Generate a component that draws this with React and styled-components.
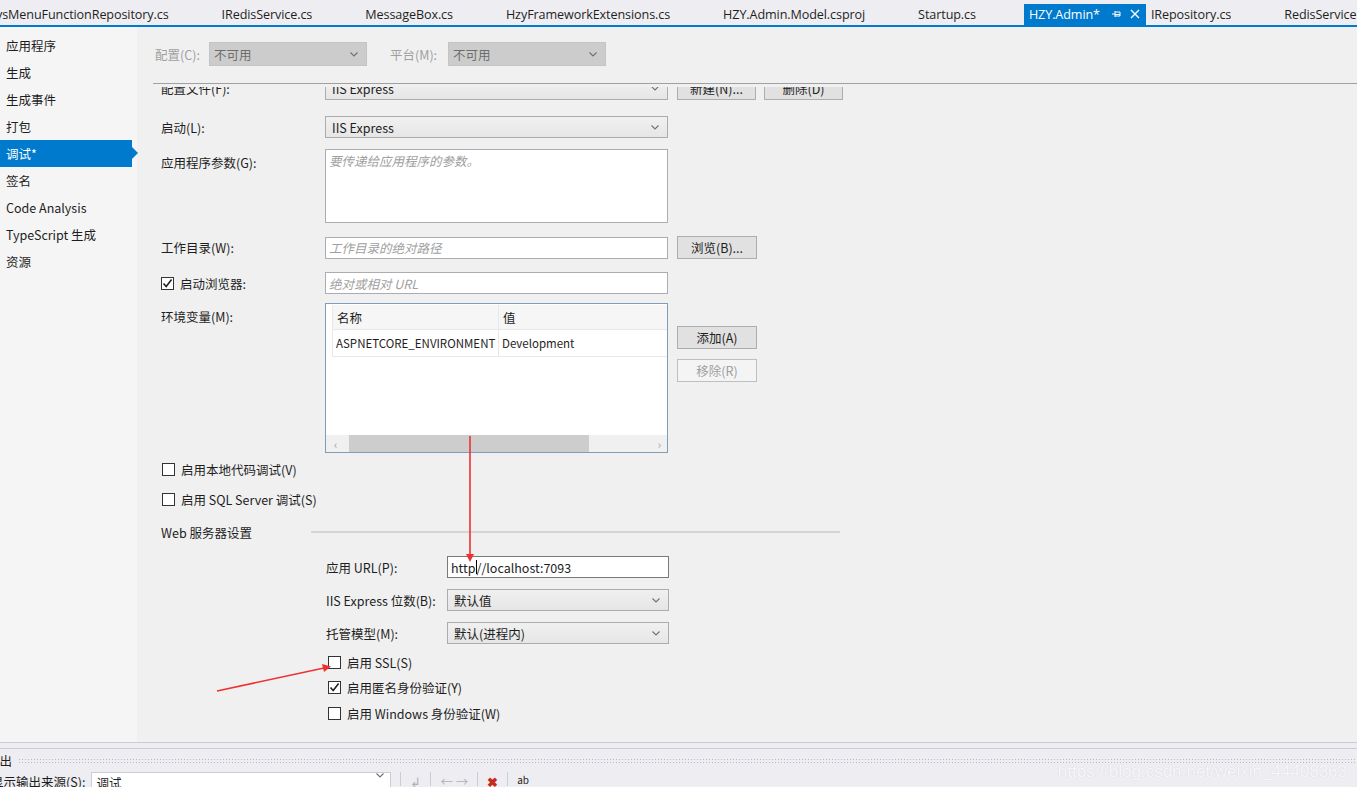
import React from "react";
import styled, { createGlobalStyle } from "styled-components";

const GlobalStyle = createGlobalStyle`
  html, body {
    margin: 0;
    padding: 0;
    background: #f0f0f0;
    overflow: hidden;
  }
  * {
    box-sizing: border-box;
  }
`;

const ui = `"Noto Sans CJK SC", "Noto Sans", sans-serif`;
const tabFont = `"Open Sans", "Noto Sans CJK SC", sans-serif`;

const Page = styled.div`
  position: relative;
  width: 1357px;
  height: 787px;
  display: flex;
  flex-direction: column;
  font-family: ${ui};
  font-size: 12.5px;
  color: #1e1e1e;
  overflow: hidden;
`;

/* ---------- document tabs ---------- */

const TabBar = styled.div`
  height: 27px;
  flex: none;
  display: flex;
  align-items: flex-end;
  background: #eeeef2;
  border-bottom: 2px solid #007acc;
  white-space: nowrap;
  overflow: hidden;
`;

const Tab = styled.div`
  height: 21px;
  display: flex;
  align-items: center;
  gap: 12px;
  margin-left: ${(p) => (p.$first ? "-4px" : "0")};
  padding: 0 ${(p) => (p.$active ? "6px" : "48px")} 1px ${(p) => (p.$first ? "0" : "5px")};
  background: ${(p) => (p.$active ? "#007acc" : "transparent")};
  color: ${(p) => (p.$active ? "#fff" : "#1e1e1e")};
  font-family: ${tabFont};
  font-size: 12.6px;
  letter-spacing: -0.1px;
  flex: none;
`;

const TabIcons = styled.span`
  display: flex;
  align-items: center;
  gap: 8px;
`;

/* ---------- body ---------- */

const Body = styled.div`
  flex: 1;
  display: flex;
  min-height: 0;
`;

const Sidebar = styled.nav`
  width: 137px;
  flex: none;
  background: #f5f5f5;
  padding-top: 5px;
`;

const NavItem = styled.div`
  position: relative;
  width: 132px;
  height: 27px;
  display: flex;
  align-items: center;
  padding-left: 6px;
  font-size: 12.5px;
  background: ${(p) => (p.$active ? "#007acc" : "transparent")};
  color: ${(p) => (p.$active ? "#fff" : "#1e1e1e")};

  ${(p) =>
    p.$active &&
    `
    &::after {
      content: "";
      position: absolute;
      right: -6px;
      top: 7px;
      border-top: 6.5px solid transparent;
      border-bottom: 6.5px solid transparent;
      border-left: 6px solid #007acc;
    }
  `}
`;

const Main = styled.main`
  flex: 1;
  display: flex;
  flex-direction: column;
  background: #f0f0f0;
  min-width: 0;
`;

const ConfigBar = styled.div`
  height: 57px;
  flex: none;
  display: flex;
  align-items: center;
  padding: 0 0 2px 2px;
  margin-left: 16px;
  border-bottom: 1px solid #a0a0a0;
  color: #a0a0a0;
`;

const ConfigLabel = styled.span`
  width: ${(p) => p.$w}px;
  flex: none;
`;

const DisabledSelect = styled.div`
  width: 158px;
  height: 24px;
  display: flex;
  align-items: center;
  justify-content: space-between;
  padding: 0 8px 0 4px;
  background: #cccccc;
  border: 1px solid #c4c4c4;
  color: #6d6d6d;
  margin-right: 23px;
`;

const Scroll = styled.div`
  flex: 1;
  overflow: hidden;
  min-height: 0;
  margin-top: 3px;
`;

const Form = styled.div`
  margin-top: -10px;
  padding-left: 24px;
  display: flex;
  flex-direction: column;
`;

const Row = styled.div`
  display: grid;
  grid-template-columns: ${(p) => p.$label || 155}px 343px auto;
  align-items: ${(p) => (p.$top ? "start" : "center")};
  column-gap: 9px;
  margin-top: ${(p) => p.$mt || 0}px;
  padding-left: ${(p) => p.$indent || 0}px;
`;

const Label = styled.label`
  display: flex;
  align-items: center;
  gap: 6px;
  padding-top: ${(p) => (p.$top ? "4px" : "0")};
  white-space: nowrap;
`;

const Select = styled.div`
  width: ${(p) => p.$w || 343}px;
  height: 22px;
  display: flex;
  align-items: center;
  justify-content: space-between;
  padding: 0 8px 0 6px;
  background: linear-gradient(#f0f0f0, #e6e6e6);
  border: 1px solid #acacac;
`;

const Input = styled.div`
  width: ${(p) => p.$w || 343}px;
  height: ${(p) => p.$h || 22}px;
  display: flex;
  align-items: ${(p) => (p.$multi ? "flex-start" : "center")};
  padding: ${(p) => (p.$multi ? "1px 3px" : "0 3px")};
  background: #fff;
  border: 1px solid ${(p) => (p.$dark ? "#7a7a7a" : "#abadb3")};
  color: ${(p) => (p.$placeholder ? "#a0a0a0" : "#1e1e1e")};
  font-style: ${(p) => (p.$placeholder ? "italic" : "normal")};
`;

const Caret = styled.span`
  display: inline-block;
  width: 1px;
  height: 14px;
  background: #000;
`;

const Buttons = styled.div`
  display: flex;
  gap: 8px;
`;

const Button = styled.div`
  width: ${(p) => p.$w || 80}px;
  height: 23px;
  display: flex;
  align-items: center;
  justify-content: center;
  background: ${(p) => (p.$disabled ? "#f4f4f4" : "#e1e1e1")};
  border: 1px solid ${(p) => (p.$disabled ? "#bfbfbf" : "#adadad")};
  color: ${(p) => (p.$disabled ? "#a0a0a0" : "#1e1e1e")};
`;

const ButtonColumn = styled.div`
  display: flex;
  flex-direction: column;
  gap: 10px;
  padding-top: 23px;
`;

const Grid = styled.div`
  height: 150px;
  display: flex;
  flex-direction: column;
  background: #fff;
  border: 1px solid #7f9db9;
  padding-left: 6px;
`;

const GridRow = styled.div`
  height: ${(p) => (p.$head ? 25 : 27)}px;
  display: grid;
  grid-template-columns: 166px 1fr;
  background: ${(p) => (p.$head ? "#f6f6f6" : "#fff")};
  border-bottom: 1px solid #e8e8e8;
  margin-top: ${(p) => (p.$head ? 1 : 0)}px;
`;

const Cell = styled.div`
  display: flex;
  align-items: center;
  padding-left: ${(p) => (p.$head ? 4 : 3)}px;
  border-left: 1px solid #e8e8e8;
  font-size: ${(p) => (p.$small ? 11.5 : 12.5)}px;
  white-space: nowrap;
  overflow: hidden;
`;

const GridFill = styled.div`
  flex: 1;
`;

const HScroll = styled.div`
  height: 17px;
  display: flex;
  align-items: center;
  background: #f0f0f0;
  margin-left: -6px;
  padding: 0 6px 0 8px;
  gap: 12px;
  color: #9a9a9a;
  font-size: 11px;
`;

const Thumb = styled.div`
  height: 17px;
  width: 240px;
  background: #cdcdcd;
`;

const ScrollSpacer = styled.div`
  flex: 1;
`;

const CheckRow = styled.label`
  height: 18px;
  display: flex;
  align-items: center;
  gap: 6px;
  margin-top: ${(p) => p.$mt || 0}px;
  padding-left: ${(p) => p.$indent || 1}px;
`;

const Box = styled.span`
  width: 13px;
  height: 13px;
  flex: none;
  display: flex;
  align-items: center;
  justify-content: center;
  background: #fff;
  border: 1px solid #333;
`;

const Section = styled.div`
  display: flex;
  align-items: center;
  height: 18px;
  margin-top: ${(p) => p.$mt || 0}px;
  width: 679px;
`;

const SectionTitle = styled.span`
  width: 150px;
  flex: none;
`;

const SectionLine = styled.div`
  flex: 1;
  height: 2px;
  background: #d5d5d5;
`;

/* ---------- output panel ---------- */

const Output = styled.div`
  height: 45px;
  flex: none;
  background: #eeeef2;
  border-top: 1px solid #ccccd6;
  display: flex;
  flex-direction: column;
`;

const OutputSplit = styled.div`
  height: 6px;
  border-bottom: 1px solid #ccccd6;
`;

const OutputHead = styled.div`
  height: 24px;
  display: flex;
  align-items: center;
  gap: 6px;
  margin-left: -13px;
`;

const Dots = styled.div`
  flex: 1;
  height: 5px;
  background-image: radial-gradient(#b9b9c4 0.7px, transparent 0.8px);
  background-size: 3px 3px;
`;

const OutputTools = styled.div`
  display: flex;
  align-items: flex-start;
  gap: 6px;
  margin-left: -9px;
  height: 16px;
  overflow: hidden;
`;

const SourceSelect = styled.div`
  width: 300px;
  height: 20px;
  background: #fff;
  border: 1px solid #ccccd6;
  padding: 0 6px 0 4px;
  display: flex;
  justify-content: space-between;
`;

const ToolSep = styled.span`
  width: 1px;
  height: 14px;
  background: #ccccd6;
  margin: 0 3px;
`;

const ToolGlyph = styled.span`
  color: ${(p) => p.$color || "#b0b0b8"};
  font-weight: ${(p) => (p.$bold ? 700 : 400)};
  font-size: ${(p) => p.$size || 12.5}px;
`;

const Watermark = styled.div`
  position: absolute;
  right: 10px;
  bottom: 5px;
  font-family: "Liberation Sans", sans-serif;
  font-size: 17px;
  color: rgba(255, 255, 255, 0.85);
  text-shadow: 0 0 1px rgba(180, 180, 190, 0.6);
`;

const Arrows = styled.svg`
  position: absolute;
  left: 0;
  top: 0;
  pointer-events: none;
`;

const Chevron = () => (
  <svg width="8" height="5" viewBox="0 0 8 5">
    <path d="M0.5 0.5 L4 4 L7.5 0.5" fill="none" stroke="#707070" strokeWidth="1.1" />
  </svg>
);

const Check = () => (
  <svg width="11" height="11" viewBox="0 0 11 11">
    <path d="M1.5 5.5 L4.2 8.6 L9.6 1.5" fill="none" stroke="#222" strokeWidth="1.6" />
  </svg>
);

const tabs = [
  "ysMenuFunctionRepository.cs",
  "IRedisService.cs",
  "MessageBox.cs",
  "HzyFrameworkExtensions.cs",
  "HZY.Admin.Model.csproj",
  "Startup.cs",
];

const nav = [
  "应用程序",
  "生成",
  "生成事件",
  "打包",
  "调试*",
  "签名",
  "Code Analysis",
  "TypeScript 生成",
  "资源",
];

function CheckOption({ checked, children, mt, indent }) {
  return (
    <CheckRow $mt={mt} $indent={indent}>
      <Box>{checked && <Check />}</Box>
      {children}
    </CheckRow>
  );
}

export default function App() {
  return (
    <Page>
      <GlobalStyle />
      <TabBar>
        {tabs.map((t, i) => (
          <Tab key={t} $first={i === 0}>
            {t}
          </Tab>
        ))}
        <Tab $active>
          HZY.Admin*
          <TabIcons>
            <svg width="10" height="10" viewBox="0 0 10 10">
              <path d="M0 5 H3 M3 2 V8 M3 3 H8 V7 H3 M3 5.5 H8" fill="none" stroke="#fff" strokeWidth="1" />
            </svg>
            <svg width="10" height="10" viewBox="0 0 10 10">
              <path d="M1 1 L9 9 M9 1 L1 9" stroke="#fff" strokeWidth="1.4" />
            </svg>
          </TabIcons>
        </Tab>
        <Tab>IRepository.cs</Tab>
        <Tab>RedisService.cs</Tab>
      </TabBar>

      <Body>
        <Sidebar>
          {nav.map((n) => (
            <NavItem key={n} $active={n === "调试*"}>
              {n}
            </NavItem>
          ))}
        </Sidebar>

        <Main>
          <ConfigBar>
            <ConfigLabel $w={54}>配置(C):</ConfigLabel>
            <DisabledSelect>
              不可用
              <Chevron />
            </DisabledSelect>
            <ConfigLabel $w={58}>平台(M):</ConfigLabel>
            <DisabledSelect>
              不可用
              <Chevron />
            </DisabledSelect>
          </ConfigBar>

          <Scroll>
            <Form>
              <Row>
                <Label>配置文件(F):</Label>
                <Select>
                  IIS Express
                  <Chevron />
                </Select>
                <Buttons>
                  <Button $w={79}>新建(N)...</Button>
                  <Button $w={79}>删除(D)</Button>
                </Buttons>
              </Row>

              <Row $mt={16}>
                <Label>启动(L):</Label>
                <Select>
                  IIS Express
                  <Chevron />
                </Select>
              </Row>

              <Row $mt={11} $top>
                <Label $top>应用程序参数(G):</Label>
                <Input $h={74} $multi $placeholder>
                  要传递给应用程序的参数。
                </Input>
              </Row>

              <Row $mt={13}>
                <Label>工作目录(W):</Label>
                <Input $placeholder>工作目录的绝对路径</Input>
                <Button $w={80}>浏览(B)...</Button>
              </Row>

              <Row $mt={13}>
                <Label>
                  <Box>
                    <Check />
                  </Box>
                  启动浏览器:
                </Label>
                <Input $placeholder>绝对或相对 URL</Input>
              </Row>

              <Row $mt={9} $top>
                <Label $top>环境变量(M):</Label>
                <Grid>
                  <GridRow $head>
                    <Cell $head>名称</Cell>
                    <Cell $head>值</Cell>
                  </GridRow>
                  <GridRow>
                    <Cell $small>ASPNETCORE_ENVIRONMENT</Cell>
                    <Cell $small>Development</Cell>
                  </GridRow>
                  <GridFill />
                  <HScroll>
                    ‹
                    <Thumb />
                    <ScrollSpacer />›
                  </HScroll>
                </Grid>
                <ButtonColumn>
                  <Button $w={80}>添加(A)</Button>
                  <Button $w={80} $disabled>
                    移除(R)
                  </Button>
                </ButtonColumn>
              </Row>

              <CheckOption mt={7}>启用本地代码调试(V)</CheckOption>
              <CheckOption mt={12}>启用 SQL Server 调试(S)</CheckOption>

              <Section $mt={15}>
                <SectionTitle>Web 服务器设置</SectionTitle>
                <SectionLine />
              </Section>

              <Row $mt={15} $indent={165} $label={112}>
                <Label>应用 URL(P):</Label>
                <Input $dark $w={222}>
                  http
                  <Caret />
                  //localhost:7093
                </Input>
              </Row>

              <Row $mt={11} $indent={165} $label={112}>
                <Label>IIS Express 位数(B):</Label>
                <Select $w={222}>
                  默认值
                  <Chevron />
                </Select>
              </Row>

              <Row $mt={11} $indent={165} $label={112}>
                <Label>托管模型(M):</Label>
                <Select $w={222}>
                  默认(进程内)
                  <Chevron />
                </Select>
              </Row>

              <CheckOption mt={9} indent={167}>
                启用 SSL(S)
              </CheckOption>
              <CheckOption mt={7} indent={167} checked>
                启用匿名身份验证(Y)
              </CheckOption>
              <CheckOption mt={8} indent={167}>
                启用 Windows 身份验证(W)
              </CheckOption>
            </Form>
          </Scroll>
        </Main>
      </Body>

      <Output>
        <OutputSplit />
        <OutputHead>
          输出
          <Dots />
        </OutputHead>
        <OutputTools>
          显示输出来源(S):
          <SourceSelect>
            调试
            <Chevron />
          </SourceSelect>
          <ToolSep />
          <ToolGlyph>↲</ToolGlyph>
          <ToolSep />
          <ToolGlyph>← →</ToolGlyph>
          <ToolSep />
          <ToolGlyph $color="#c42b1c" $bold>
            ✖
          </ToolGlyph>
          <ToolSep />
          <ToolGlyph $color="#1e1e1e" $size={10}>
            ab
          </ToolGlyph>
        </OutputTools>
      </Output>

      <Watermark>https://blog.csdn.net/weixin_44408363</Watermark>

      <Arrows width="1357" height="787" viewBox="0 0 1357 787">
        <line x1="470" y1="436" x2="470" y2="556" stroke="#f03030" strokeWidth="1.6" />
        <path d="M466 554 L470 562 L474 554 Z" fill="#f03030" />
        <line x1="217" y1="691" x2="324" y2="668" stroke="#f03030" strokeWidth="1.6" />
        <path d="M322 664 L331 666.5 L324 672 Z" fill="#f03030" />
      </Arrows>
    </Page>
  );
}
